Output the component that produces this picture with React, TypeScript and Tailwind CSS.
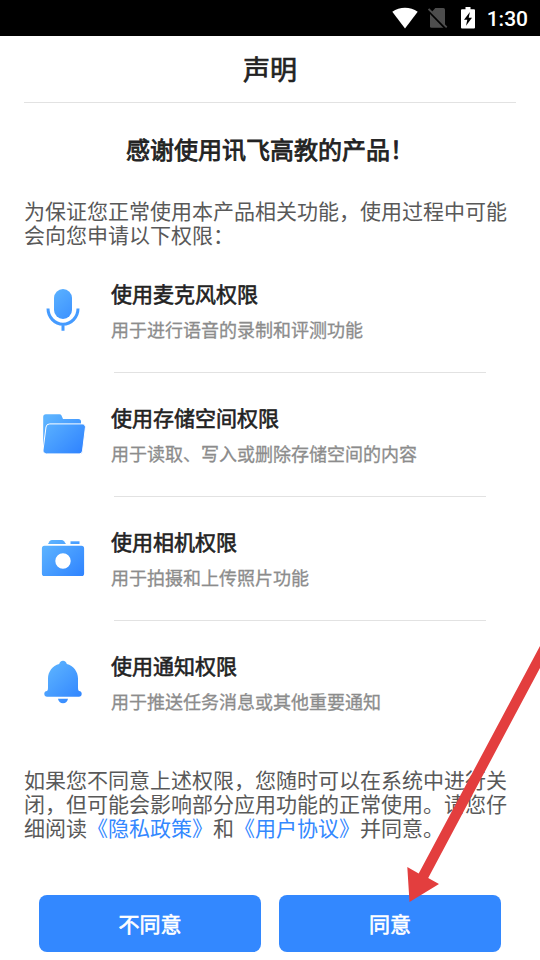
import type { ReactNode } from "react";

function StatusBar() {
  return (
    <div className="flex h-9 shrink-0 items-center justify-end bg-black pr-3 text-white">
      <svg width="26" height="22" viewBox="0 0 26 22" className="mr-[10px]">
        <path d="M.3 4.8C7.6-.6 18.4-.6 25.7 4.8L13 21.600Z" fill="#fff" />
      </svg>
      <svg width="20" height="22" viewBox="0 0 20 22" className="mr-[13px]">
        <path
          d="M7.3 1H15.4a1.6 1.6 0 0 1 1.6 1.6V19.2a1.6 1.6 0 0 1-1.6 1.6H3.6A1.6 1.6 0 0 1 2 19.2V7Z"
          fill="#4d4d4d"
        />
        <path d="M0 3.4 18 22" stroke="#000" strokeWidth="2.2" />
        <path d="M.6 2 18.7 20.4" stroke="#4d4d4d" strokeWidth="1.8" />
      </svg>
      <svg width="14" height="22" viewBox="0 0 14 22" className="mr-[12px]">
        <path
          d="M4.5 0h5v2.2H13a1 1 0 0 1 1 1V20.500a1 1 0 0 1-1 1H1a1 1 0 0 1-1-1V3.200a1 1 0 0 1 1-1h3.500Z"
          fill="#fff"
        />
        <path d="M8.900 5 3 12.800h3.300l-1.300 6L11 10.800H7.700Z" fill="#000" />
      </svg>
      <span className="pt-0.5 font-['Roboto',sans-serif] text-[21px] leading-9 font-medium">
        1:30
      </span>
    </div>
  );
}

function Icon({ id, children }: { id: string; children: ReactNode }) {
  return (
    <svg width="48" height="48" viewBox="0 0 48 48" fill={`url(#${id})`}>
      <defs>
        <linearGradient
          id={id}
          gradientUnits="userSpaceOnUse"
          x1="8"
          y1="8"
          x2="40"
          y2="42"
        >
          <stop stopColor="#5cb3ff" />
          <stop offset="1" stopColor="#3286ff" />
        </linearGradient>
      </defs>
      {children}
    </svg>
  );
}

const permissions = [
  {
    title: "使用麦克风权限",
    detail: "用于进行语音的录制和评测功能",
    icon: (
      <Icon id="mic">
        <rect x="15" y="3" width="18" height="30" rx="9" />
        <path
          d="M9 22.500a15 15.700 0 0 0 30 0M24 38v6.800"
          fill="none"
          stroke="#459bff"
          strokeWidth="3"
        />
      </Icon>
    ),
  },
  {
    title: "使用存储空间权限",
    detail: "用于读取、写入或删除存储空间的内容",
    icon: (
      <Icon id="folder">
        <path d="M4.200 7a2.700 2.700 0 0 1 2.700-2.700H20.500q1.400 0 2 1.200l1.500 3.500H39.400a2.600 2.600 0 0 1 2.600 2.600V26L6 41.500Q4.200 40 4.200 37Z" />
        <path
          d="M10.700 13.900H43.200a3.200 3.200 0 0 1 3.200 3.700L43.500 40.900a3.300 3.300 0 0 1-3.300 3H7.500a3.500 3.500 0 0 1-3.500-3.800L7 17a3.700 3.700 0 0 1 3.700-3.100Z"
          stroke="#fff"
          strokeWidth="1"
        />
      </Icon>
    ),
  },
  {
    title: "使用相机权限",
    detail: "用于拍摄和上传照片功能",
    icon: (
      <Icon id="camera">
        <path d="M9 9.900 10.600 7.200Q11.700 6 13 6H22.500Q24 6 25 7.200L27 9.900Z" />
        <path d="M31.500 7.300H40.500V10H31.500Z" />
        <path
          fillRule="evenodd"
          d="M5.500 11.700h37a2.600 2.600 0 0 1 2.600 2.600v25.200a2.600 2.600 0 0 1-2.600 2.600h-37a2.600 2.600 0 0 1-2.600-2.600V14.300a2.600 2.600 0 0 1 2.600-2.600ZM24 19.300a7.700 7.700 0 1 0 0 15.400A7.700 7.700 0 0 0 24 19.300Z"
        />
      </Icon>
    ),
  },
  {
    title: "使用通知权限",
    detail: "用于推送任务消息或其他重要通知",
    icon: (
      <Icon id="bell">
        <path d="M24 2.700c2 0 3.400 1.300 3.800 3.200C34.500 7.700 39 13.500 39 20.500V30q0 2.600 1 2.900a2.950 2.950 0 0 1-.5 5.900H8.500A2.950 2.950 0 0 1 8 32.900q1-.3 1-2.900V20.500C9 13.500 13.500 7.700 20.200 5.900 20.600 4 22 2.700 24 2.700Z" />
        <path d="M19 40.700h10c-.4 2.700-2.300 4.500-5 4.500s-4.600-1.800-5-4.500Z" />
      </Icon>
    ),
  },
];

function PermissionRow({
  title,
  detail,
  icon,
}: {
  title: string;
  detail: string;
  icon: ReactNode;
}) {
  return (
    <li className="group flex h-[124px] pl-[39px]">
      <div className="w-[72px] pt-[39px]">{icon}</div>
      <div className="flex-1 pt-[31px]">
        <h3 className="text-[21px] leading-[30px] text-[#222] [-webkit-text-stroke:0.6px_#222]">
          {title}
        </h3>
        <p className="mt-[9px] text-[18px] leading-6 text-[#8c8c8c] [-webkit-text-stroke:0.3px_#8c8c8c]">
          {detail}
        </p>
        <div className="mt-[31px] mr-[54px] ml-[3px] h-px bg-[#e2e2e2] group-last:hidden" />
      </div>
    </li>
  );
}

export default function App() {
  return (
    <div className="relative flex h-[960px] w-[540px] flex-col overflow-hidden bg-white font-['Noto_Sans_CJK_SC',sans-serif]">
      <StatusBar />
      <h1 className="mx-6 h-[67px] border-b border-[#e2e2e2] text-center text-[27px] leading-[66px] text-[#222] [-webkit-text-stroke:0.7px_#222]">
        声明
      </h1>
      <h2 className="mt-[31px] text-center text-[24px] leading-[30px] text-[#222] [-webkit-text-stroke:0.8px_#222]">
        感谢使用讯飞高教的产品！
      </h2>
      <p className="mx-6 mt-[34px] text-[21px] leading-6 text-[#595959]">
        为保证您正常使用本产品相关功能，使用过程中可能
        <br />
        会向您申请以下权限：
      </p>
      <ul className="mt-px">
        {permissions.map((item) => (
          <PermissionRow key={item.title} {...item} />
        ))}
      </ul>
      <p className="mt-6 ml-6 text-[21px] leading-6 whitespace-nowrap text-[#595959]">
        如果您不同意上述权限，您随时可以在系统中进行关
        <br />
        闭，但可能会影响部分应用功能的正常使用。请您仔
        <br />
        细阅读<a className="text-[#3388ff]">《隐私政策》</a>和
        <a className="text-[#3388ff]">《用户协议》</a>并同意。
      </p>
      <div className="mx-[39px] mt-[56px] grid grid-cols-2 gap-[18px] text-[21px] text-white [-webkit-text-stroke:0.6px_#fff]">
        <button type="button" className="h-[57px] rounded-lg bg-[#3388ff]">
          不同意
        </button>
        <button type="button" className="h-[57px] rounded-lg bg-[#3388ff]">
          同意
        </button>
      </div>
      {/* pointer to the agree button */}
      <svg
        width="140"
        height="270"
        viewBox="400 640 140 270"
        className="pointer-events-none absolute top-[640px] left-[400px]"
      >
        <path
          d="M409.500 902 407.300 867 418.700 873.500 540 646V668L428.200 878 439 884Z"
          fill="#e33e3e"
        />
      </svg>
    </div>
  );
}
